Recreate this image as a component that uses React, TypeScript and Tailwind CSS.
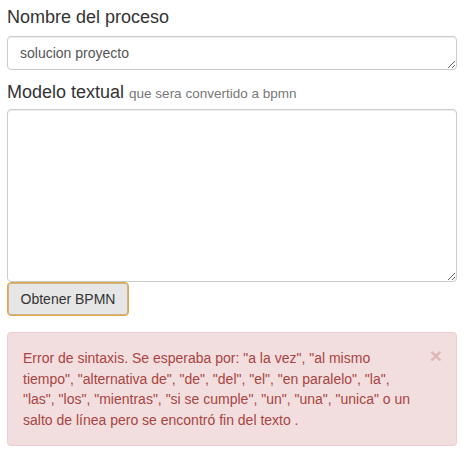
import React from "react";

export default function App() {
  return (
    <div
      className="w-[467px] h-[460px] bg-white text-[#333] text-[14px] leading-[20px]"
      style={{ fontFamily: '"Liberation Sans", Arial, sans-serif' }}
    >
      <div className="w-[450px] ml-[7px] pt-[7px]">
        <div className="text-[18px] leading-[20px] text-[#333]">Nombre del proceso</div>
        <textarea
          className="mt-[9px] block w-full h-[34px] px-[12px] py-[6px] text-[14px] leading-[20px] text-[#555] bg-white border border-[#ccc] rounded-[4px] shadow-[inset_0_1px_1px_rgba(0,0,0,0.075)] outline-none overflow-hidden"
          defaultValue="solucion proyecto"
          style={{ fontFamily: '"Liberation Sans", Arial, sans-serif' }}
        />
        <div className="mt-[12px] h-[20px] text-[18px] leading-[20px] text-[#333]">
          Modelo textual{" "}
          <span className="text-[13.5px] leading-[0px] text-[#777]">que sera convertido a bpmn</span>
        </div>
        <textarea
          className="mt-[7px] block w-full h-[173px] px-[12px] py-[6px] text-[14px] leading-[20px] text-[#555] bg-white border border-[#ccc] rounded-[4px] shadow-[inset_0_1px_1px_rgba(0,0,0,0.075)] outline-none"
          style={{ fontFamily: '"Liberation Sans", Arial, sans-serif' }}
        />
        <button
          className="block h-[34px] w-[122px] px-[12px] text-[14px] leading-[20px] text-[#333] bg-[#e6e6e6] border border-[#e2a846] rounded-[4px] shadow-[inset_0_0_0_1px_#c9b48c]"
          style={{ fontFamily: '"Liberation Sans", Arial, sans-serif' }}
        >
          Obtener BPMN
        </button>
        <div className="mt-[16px] relative bg-[#f2dede] border border-[#ebccd1] rounded-[4px] pl-[15px] pr-[35px] py-[15px] text-[#a94442] text-[14px] leading-[20.5px]">
          <span className="absolute right-[14px] top-[12px] text-[21px] font-bold leading-[21px] text-[#a94442] opacity-25">
            ×
          </span>
          Error de sintaxis. Se esperaba por: "a la vez", "al mismo tiempo", "alternativa de", "de", "del", "el", "en paralelo", "la", "las", "los", "mientras", "si se cumple", "un", "una", "unica" o un salto de línea pero se encontró fin del texto .
        </div>
      </div>
    </div>
  );
}
